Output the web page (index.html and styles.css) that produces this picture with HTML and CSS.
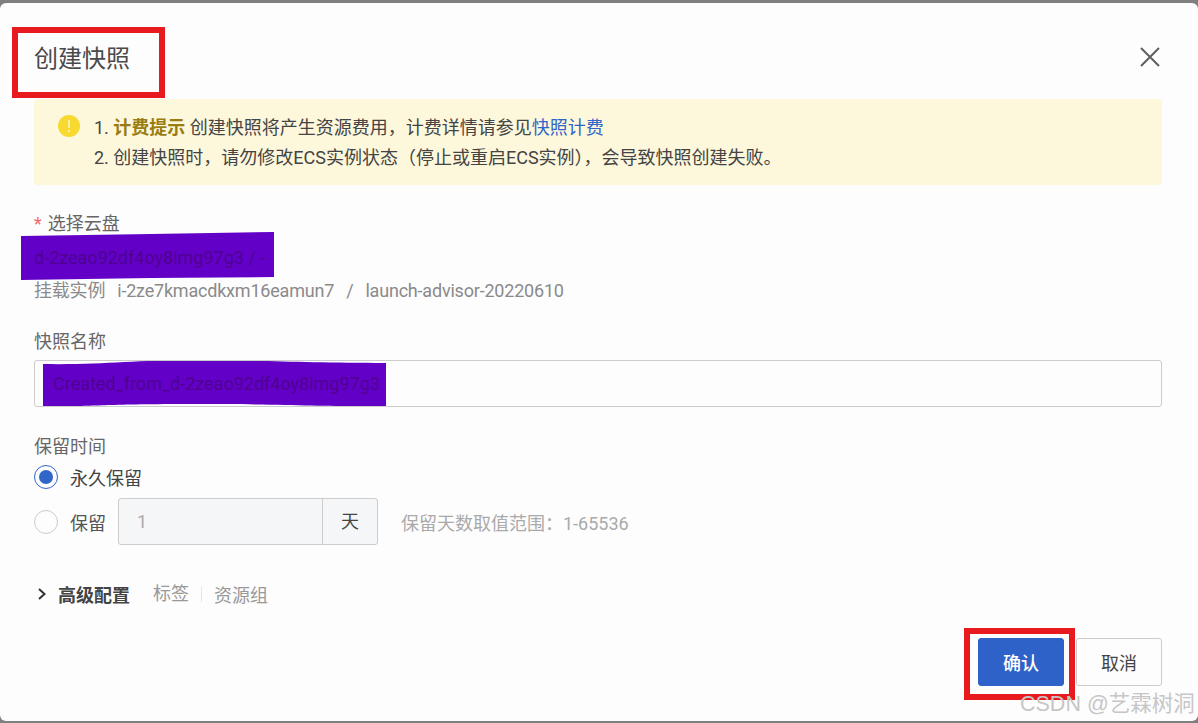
FILE: index.html
```html
<!DOCTYPE html>
<html lang="zh">
<head>
<meta charset="utf-8">
<title>创建快照</title>
<link rel="stylesheet" href="styles.css">
</head>
<body>
<svg class="scribble s1" width="254" height="50" viewBox="0 0 254 50"><path d="M0 4 130 2 253 0V45L130 46 0 48Z" fill="#6200c8"/></svg>
<svg class="scribble s2" width="344" height="50" viewBox="0 0 344 50"><path d="M0 4C60 5 90 0 150 0S260 3 343 3V46C280 47 250 44 150 44S50 47 0 46Z" fill="#6200c8"/></svg>
<div class="dialog">
  <header class="head">
    <h1 class="title">创建快照</h1>
    <svg class="close" width="20" height="20" viewBox="0 0 20 20"><path d="M1 1 19 19M19 1 1 19" stroke="#5f5f5f" stroke-width="2" fill="none"/></svg>
  </header>
  <section class="alert">
    <svg class="alert-icon" width="22" height="22" viewBox="0 0 22 22"><circle cx="11" cy="11" r="11" fill="#f8d92f"/><rect x="10" y="5" width="2" height="8" fill="#fdf0a0"/><rect x="10" y="15" width="2" height="2" fill="#fdf0a0"/></svg>
    <div class="alert-text">
      <p>1. <b class="tip">计费提示</b> 创建快照将产生资源费用，计费详情请参见<span class="link">快照计费</span></p>
      <p>2. 创建快照时，请勿修改ECS实例状态（停止或重启ECS实例），会导致快照创建失败。</p>
    </div>
  </section>
  <section class="field disk">
    <div class="label"><span class="star">*</span>选择云盘</div>
    <div class="disk-id">d-2zeao92df4oy8img97g3 / -</div>
    <div class="mount"><span>挂载实例</span><span>i-2ze7kmacdkxm16eamun7</span><span>/</span><span>launch-advisor-20220610</span></div>
  </section>
  <section class="field name">
    <div class="label">快照名称</div>
    <div class="input">Created_from_d-2zeao92df4oy8img97g3</div>
  </section>
  <section class="field keep">
    <div class="label">保留时间</div>
    <div class="radio-row first"><span class="radio on"></span><span>永久保留</span></div>
    <div class="radio-row"><span class="radio"></span><span class="muted-label">保留</span>
      <div class="group"><span class="num">1</span><span class="unit">天</span></div>
      <span class="hint">保留天数取值范围：1-65536</span>
    </div>
  </section>
  <section class="advanced">
    <svg class="chev" width="10" height="14" viewBox="0 0 10 14"><path d="M2 2 7.5 7 2 12" stroke="#333" stroke-width="2" fill="none"/></svg>
    <b>高级配置</b><span class="tag first-tag">标签</span><span class="tag">资源组</span>
  </section>
  <footer class="foot">
    <button class="btn primary">确认</button>
    <button class="btn">取消</button>
  </footer>
</div>
<div class="redbox r1"></div>
<div class="redbox r2"></div>
<div class="mark">CSDN @艺霖树洞</div>
</body>
</html>
```

FILE: styles.css
```css
* { box-sizing: border-box; }
html, body { margin: 0; height: 723px; overflow: hidden; }
body {
  background: #7f7f7f;
  font-family: Roboto, "Noto Sans CJK SC", sans-serif;
  font-size: 18px;
  color: #555;
  padding-top: 3px;
  position: relative;
}
.dialog {
  height: 718px;
  background: #fdfdfd;
  border-radius: 6px;
  padding: 0 36px 0 34px;
  display: flex;
  flex-direction: column;
}
.head { height: 96px; display: flex; align-items: center; justify-content: space-between; padding-top: 15px; }
.title { margin: 0; font-size: 24px; font-weight: 400; color: #4a4a4a; line-height: 34px; }
.close { margin: -3px 2px 0 0; }
.alert {
  height: 86px;
  background: #fdf7dc;
  border-radius: 3px;
  display: flex;
  padding: 14px 24px;
  gap: 14px;
}
.alert-icon { flex: none; margin-top: 2px; }
.alert-text { color: #444; line-height: 30px; }
.alert-text p { margin: 0; white-space: nowrap; }
.tip { color: #9a7d10; font-weight: 700; }
.link { color: #2f66c8; }
.field .label { line-height: 24px; color: #666; }
.disk { margin-top: 27px; }
.star { color: #ef6b6b; margin-right: 6px; }
.disk-id { line-height: 44px; height: 34px; color: #4f0090; position: relative; }
.mount { display: flex; gap: 12px; line-height: 42px; color: #8a8a8a; white-space: nowrap; letter-spacing: -0.2px; }
.name { margin-top: 18px; }
.input { height: 47px; margin-top: 6px; border: 1px solid #ccc; border-radius: 3px; padding-left: 18px; line-height: 46px; color: #4f0090; position: relative; }
.keep { margin-top: 28px; }
.radio-row { display: flex; align-items: center; gap: 12px; color: #444; }
.radio-row.first { height: 24px; margin-top: 6px; }
.radio-row:not(.first) { margin-top: 9px; height: 47px; }
.radio { width: 24px; height: 24px; border-radius: 50%; border: 1px solid #ccc; background: #fdfdfd; flex: none; }
.radio.on { border-color: #2f66c8; display: flex; align-items: center; justify-content: center; }
.radio.on::after { content: ""; width: 14px; height: 14px; border-radius: 50%; background: #2f66c8; }
.muted-label { color: #555; }
.group { width: 260px; height: 47px; display: flex; border: 1px solid #ccc; border-radius: 3px; background: #f5f6f7; }
.num { flex: 1; padding-left: 18px; line-height: 45px; color: #aaa; }
.unit { width: 55px; border-left: 1px solid #ccc; text-align: center; line-height: 45px; color: #444; }
.hint { margin-left: 11px; color: #aaa; }
.advanced { margin-top: 35px; height: 28px; display: flex; align-items: center; color: #444; }
.chev { margin: 0 11px 0 3px; flex: none; }
.advanced b { font-weight: 700; }
.tag { color: #999; }
.first-tag { margin-left: 23px; border-right: 1px solid #e6e6e6; line-height: 16px; padding-right: 12px; margin-right: 12px; }
.foot { margin-top: 30px; display: flex; justify-content: flex-end; gap: 12px; }
.btn { width: 86px; height: 48px; border: 1px solid #ccc; border-radius: 3px; background: #fdfdfd; font: inherit; color: #444; padding: 0; }
.btn.primary { background: #2f62c8; border-color: #2f62c8; color: #fff; font-weight: 500; }
.scribble { position: absolute; z-index: 1; }
.disk-id, .input { z-index: 2; }
.s1 { left: 21px; top: 232px; }
.s2 { left: 43px; top: 360px; }
.redbox { position: absolute; border: 6px solid #e81a1d; }
.r1 { left: 12px; top: 27px; width: 153px; height: 71px; }
.r2 { left: 964px; top: 628px; width: 111px; height: 72px; }
.mark { position: absolute; left: 1020px; top: 691px; font-size: 21.5px; line-height: 26px; color: #c6c6c6; font-family: "Liberation Sans", "Noto Sans CJK SC", sans-serif; white-space: nowrap; }
```
